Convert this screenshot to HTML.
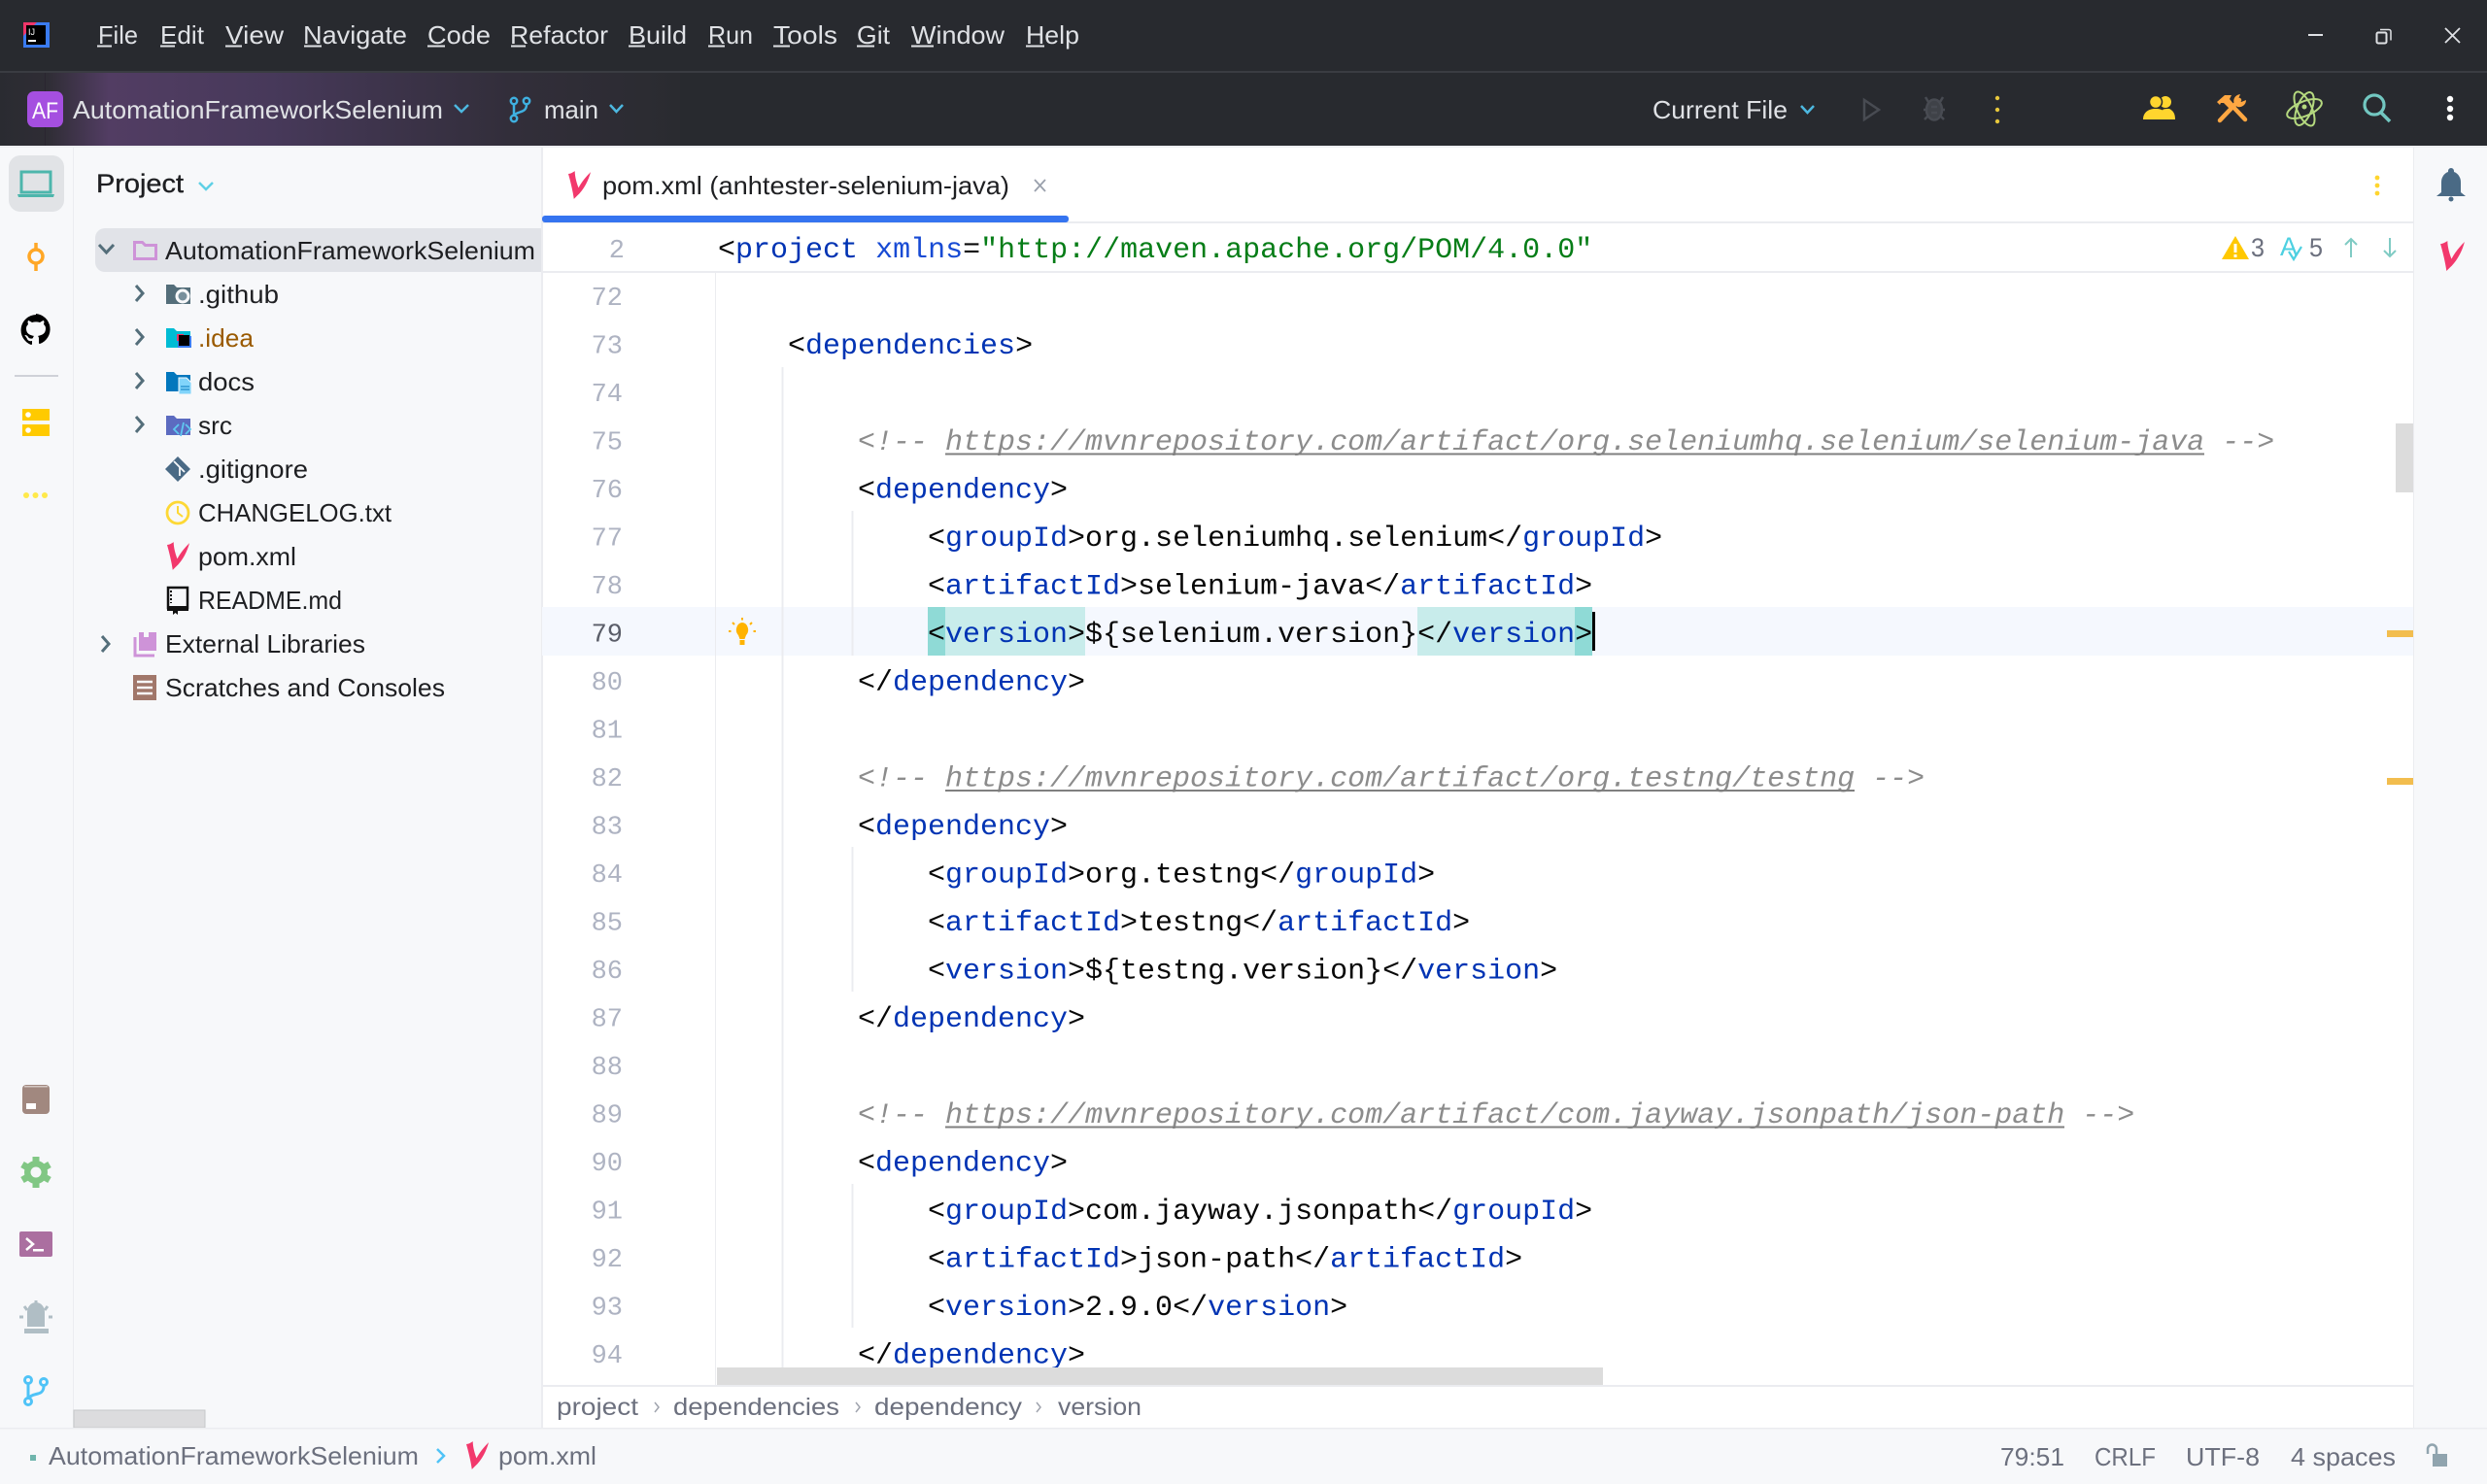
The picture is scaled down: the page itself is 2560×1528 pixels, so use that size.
<!DOCTYPE html>
<html lang="en"><head><meta charset="utf-8"><title>pom.xml</title>
<style>
html,body{margin:0;padding:0;width:2560px;height:1528px;overflow:hidden;background:#f7f8fa}
svg{display:block}
text{font-family:"Liberation Sans",sans-serif;white-space:pre}
.m{font-family:"Liberation Mono",monospace;font-size:30px;fill:#080808}
.n{font-family:"Liberation Mono",monospace;font-size:27px;fill:#aeb3c2;text-anchor:end}
.b{fill:#0033b3}
.c{fill:#8c8c8c;font-style:italic}
.w{font-size:26px;fill:#dfe1e5}
.t{font-size:26px;fill:#1e1f22}
.g{font-size:25px;fill:#6c707e}
</style></head>
<body>
<svg xmlns="http://www.w3.org/2000/svg" width="2560" height="1528" viewBox="0 0 2560 1528">
<defs>
<linearGradient id="pg" x1="0" x2="1" y1="0" y2="0">
<stop offset="0" stop-color="#2a2b31"/><stop offset=".07" stop-color="#2f2d35"/><stop offset=".16" stop-color="#523d63"/><stop offset=".4" stop-color="#47395a"/><stop offset=".75" stop-color="#322e3a"/><stop offset="1" stop-color="#2a2b30"/>
</linearGradient>
<symbol id="v" viewBox="0 0 24 30"><path d="M0 3C2 3 5 1.500 7 0C7 6 9 13 11 18C14 12 19 6 24 1C22 9 17 20 9 27L6 30C5 22 2 10 0 3Z" fill="#f2386c"/></symbol>
<clipPath id="ed"><rect x="558" y="280" width="1926" height="1146"/></clipPath>
</defs>

<!-- window chrome -->
<rect width="2560" height="1528" fill="#f7f8fa"/>
<rect width="2560" height="150" fill="#282a2f"/>
<rect y="75" width="700" height="75" fill="url(#pg)"/>
<rect y="73" width="2560" height="2" fill="#3a3c42"/>
<rect x="46" y="75" width="1" height="75" fill="#2a2530"/>

<!-- IJ logo -->
<rect x="24" y="23" width="27" height="26" fill="#3a7bf0"/>
<path d="M24 23h14l-14 14z" fill="#f0366a"/>
<rect x="27" y="26" width="20" height="20" fill="#000"/>
<text x="29" y="36" font-size="9" fill="#fff">IJ</text>
<rect x="29" y="41" width="8" height="2" fill="#fff"/>

<!-- menu -->
<g class="menu">
<text class="w" x="101" y="45" textLength="41" lengthAdjust="spacingAndGlyphs">File</text>
<text class="w" x="165" y="45" textLength="45" lengthAdjust="spacingAndGlyphs">Edit</text>
<text class="w" x="232" y="45" textLength="60" lengthAdjust="spacingAndGlyphs">View</text>
<text class="w" x="312" y="45" textLength="107" lengthAdjust="spacingAndGlyphs">Navigate</text>
<text class="w" x="440" y="45" textLength="65" lengthAdjust="spacingAndGlyphs">Code</text>
<text class="w" x="525" y="45" textLength="101" lengthAdjust="spacingAndGlyphs">Refactor</text>
<text class="w" x="647" y="45" textLength="60" lengthAdjust="spacingAndGlyphs">Build</text>
<text class="w" x="729" y="45" textLength="46" lengthAdjust="spacingAndGlyphs">Run</text>
<text class="w" x="796" y="45" textLength="66" lengthAdjust="spacingAndGlyphs">Tools</text>
<text class="w" x="882" y="45" textLength="34" lengthAdjust="spacingAndGlyphs">Git</text>
<text class="w" x="938" y="45" textLength="96" lengthAdjust="spacingAndGlyphs">Window</text>
<text class="w" x="1056" y="45" textLength="55" lengthAdjust="spacingAndGlyphs">Help</text>
<path d="M100 47.500h15M165 47.500h15M232 47.500h17M313 47.500h18M440 47.500h18M526 47.500h15M647 47.500h17M729 47.500h17M796 47.500h17M882 47.500h18M938 47.500h23M1056 47.500h19" stroke="#dfe1e5" stroke-width="2" fill="none"/>
</g>

<!-- window controls -->
<path d="M2376 36h15" stroke="#dfe1e5" stroke-width="2"/>
<rect x="2446.500" y="33.500" width="10" height="11" rx="1.500" fill="none" stroke="#dfe1e5" stroke-width="2"/>
<path d="M2450 30.500h9a2 2 0 0 1 2 2v9" fill="none" stroke="#dfe1e5" stroke-width="1.500"/>
<path d="M2517 29l15 15M2532 29l-15 15" stroke="#dfe1e5" stroke-width="1.800"/>

<!-- toolbar left -->
<rect x="28" y="94" width="37" height="37" rx="7" fill="#a54fe0"/>
<text x="33" y="122" font-size="24" fill="#fff" textLength="27" lengthAdjust="spacingAndGlyphs">AF</text>
<text class="w" x="75" y="122" textLength="381" lengthAdjust="spacingAndGlyphs">AutomationFrameworkSelenium</text>
<path d="M468 108l7 7 7-7" fill="none" stroke="#4db8e0" stroke-width="2.500"/>
<g fill="none" stroke="#3fb0e0" stroke-width="2.500">
<circle cx="529" cy="104" r="3.200"/><circle cx="529" cy="122" r="3.200"/><circle cx="542" cy="104" r="3.200"/>
<path d="M529 107.500v11M542 107.500c0 6-4 7-7 8s-5 2-6 3"/>
</g>
<text class="w" x="560" y="122" textLength="56" lengthAdjust="spacingAndGlyphs">main</text>
<path d="M628 108l6.500 7 6.500-7" fill="none" stroke="#4db8e0" stroke-width="2.500"/>

<!-- toolbar right -->
<text class="w" x="1701" y="122" textLength="139" lengthAdjust="spacingAndGlyphs">Current File</text>
<path d="M1854 109l6.500 7 6.500-7" fill="none" stroke="#4db8e0" stroke-width="2.500"/>
<path d="M1919 103v20l15-10z" fill="none" stroke="#484b52" stroke-width="2.500"/>
<g fill="#3f4248" stroke="#484b52" stroke-width="2.500">
<ellipse cx="1991" cy="113" rx="8" ry="10.500"/><path d="M1983 113h-3M1999 113h3M1985 105l-3-5M1997 105l3-5M1984 120l-3 3M1998 120l3 3"/>
<path d="M1988 110h6M1988 116h6"/>
</g>
<g fill="#e8c83c"><circle cx="2056" cy="101" r="2.200"/><circle cx="2056" cy="113" r="2.200"/><circle cx="2056" cy="125" r="2.200"/></g>
<!-- people -->
<g fill="#ffd52e">
<circle cx="2229" cy="105" r="6"/>
<path d="M2228 123h11c0-6-2-9-6-11 -3 0-5 0-7 1 2 3 2 6 2 10z"/>
<circle cx="2219" cy="105" r="6.500" stroke="#282a2f" stroke-width="1.500"/>
<path d="M2206 123c0-7 5-11 13-11s12 4 12 11z" stroke="#282a2f" stroke-width="0"/>
</g>
<!-- tools -->
<g fill="none" stroke="#ffa742" stroke-width="4.500" stroke-linecap="round">
<path d="M2285 124l20-21"/>
<path d="M2311 123l-17-18"/>
</g>
<path d="M2282 105l8-7h7l-2 4 5 6-5 4-6-6h-3l-1 2z" fill="#ffa742"/>
<path d="M2300 107c-2-4 0-9 6-10l-2 5 3 3 5-2c0 6-6 8-9 7z" fill="#ffa742"/>
<!-- atom -->
<g fill="none" stroke="#b5d97f" stroke-width="2">
<ellipse cx="2372" cy="112" rx="19" ry="7.500" transform="rotate(-22 2372 112)"/>
<ellipse cx="2372" cy="112" rx="19" ry="7.500" transform="rotate(65 2372 112)"/>
<ellipse cx="2372" cy="112" rx="18" ry="7.500" transform="rotate(112 2372 112)"/>
<circle cx="2372" cy="110" r="1.500" fill="#b5d97f"/>
</g>
<!-- search -->
<circle cx="2444" cy="108" r="10" fill="none" stroke="#72c7c1" stroke-width="3.200"/>
<path d="M2451 116l9 9" stroke="#72c7c1" stroke-width="3.500"/>
<g fill="#fff"><circle cx="2522" cy="102" r="3.200"/><circle cx="2522" cy="112" r="3.200"/><circle cx="2522" cy="121" r="3.200"/></g>

<!-- main panels -->
<rect y="150" width="2560" height="2" fill="#eeeff2"/>
<rect x="558" y="152" width="1926" height="1318" fill="#fff"/>
<rect x="75" y="152" width="1" height="1318" fill="#ebecf0"/>
<rect x="557" y="152" width="2" height="1318" fill="#ebecf0"/>
<rect x="2484" y="152" width="1" height="1318" fill="#ebecf0"/>

<!-- left rail top -->
<rect x="9" y="160" width="57" height="58" rx="12" fill="#e1e3e6"/>
<g fill="none" stroke="#4db6ac" stroke-width="3"><rect x="22" y="177" width="30" height="21"/></g>
<path d="M18 200h38l-1 3h-36z" fill="#4db6ac"/>
<g fill="none" stroke="#ffa726" stroke-width="3.500"><circle cx="37" cy="264" r="7"/><path d="M37 250v7M37 271v8"/></g>
<!-- github -->
<path d="M37 324a16 16 0 0 0-5 31c1 0 1-1 1-1v-3c-4 1-5-2-5-2-1-2-2-3-2-3-1-1 0-1 0-1 2 0 3 2 3 2 1 2 4 2 5 1 0-1 1-2 1-2-4-1-8-2-8-8 0-2 1-3 2-4 0-1-1-2 0-4 0 0 1 0 4 2a14 14 0 0 1 8 0c3-2 4-2 4-2 1 2 0 3 0 4 1 1 2 2 2 4 0 6-4 7-8 8 1 1 1 2 1 3v4s0 1 1 1a16 16 0 0 0-4-31z" fill="#000"/>
<rect x="15" y="386" width="45" height="2" fill="#cfd1d8"/>
<rect x="23" y="421" width="28" height="12" fill="#ffca00"/><rect x="23" y="437" width="28" height="12" fill="#ffca00"/>
<circle cx="29" cy="427" r="2.800" fill="#fff"/><circle cx="29" cy="443" r="2.800" fill="#fff"/>
<g fill="#ffe94a"><circle cx="27" cy="510" r="3"/><circle cx="36.500" cy="510" r="3"/><circle cx="46" cy="510" r="3"/></g>

<!-- left rail bottom -->
<rect x="23" y="1117" width="28" height="30" rx="4" fill="#a1887f"/>
<rect x="27" y="1136" width="10" height="6" fill="#fff"/>
<rect x="25" y="1118" width="24" height="1.500" fill="#d4c7c2"/>
<g fill="#81c784">
<circle cx="37" cy="1207" r="12"/>
<g stroke="#81c784" stroke-width="7">
<path d="M37 1191v32M23 1199l28 16M51 1199l-28 16"/>
</g>
<circle cx="37" cy="1207" r="5.500" fill="#f7f8fa"/>
</g>
<rect x="20" y="1268" width="34" height="26" rx="2" fill="#ab6fa0"/>
<path d="M27 1275l7 6-7 6" fill="none" stroke="#fff" stroke-width="2.500"/>
<rect x="34" y="1286" width="11" height="2.500" fill="#fff"/>
<path d="M28 1366v-15a9 10 0 0 1 18 0v15z" fill="#b0bec5"/>
<rect x="25" y="1368" width="25" height="5" fill="#b0bec5"/>
<path d="M37 1339v5M25 1345l3 4M49 1345l-3 4M20 1356h4M50 1356h4" stroke="#b0bec5" stroke-width="3"/>
<g fill="none" stroke="#4fc3f7" stroke-width="3">
<circle cx="29" cy="1421" r="3.500"/><circle cx="29" cy="1443" r="3.500"/><circle cx="45" cy="1423" r="3.500"/>
<path d="M29 1425v14M45 1427c0 5-2 7-6 8s-8 2-10 5"/>
</g>

<!-- project panel -->
<text x="99" y="198" font-size="27" fill="#1e1f22" stroke="#1e1f22" stroke-width=".35" textLength="90" lengthAdjust="spacingAndGlyphs">Project</text>
<path d="M205 188l7 7 7-7" fill="none" stroke="#5fd0e6" stroke-width="2.500"/>
<path d="M108 235h449v45H108a10 10 0 0 1-10-10v-25a10 10 0 0 1 10-10z" fill="#e1e3e8"/>

<g fill="none" stroke="#546e7a" stroke-width="3">
<path d="M102 252l7.500 8 7.500-8"/>
<path d="M140 294l7 8-7 8M140 339l7 8-7 8M140 384l7 8-7 8M140 429l7 8-7 8M105 655l7 8-7 8"/>
</g>

<text class="t" x="170" y="267" textLength="381" lengthAdjust="spacingAndGlyphs">AutomationFrameworkSelenium</text>
<text class="t" x="204" y="312" textLength="83" lengthAdjust="spacingAndGlyphs">.github</text>
<text class="t" x="204" y="357" textLength="57" lengthAdjust="spacingAndGlyphs" style="fill:#9a5a00">.idea</text>
<text class="t" x="204" y="402" textLength="58" lengthAdjust="spacingAndGlyphs">docs</text>
<text class="t" x="204" y="447" textLength="35" lengthAdjust="spacingAndGlyphs">src</text>
<text class="t" x="204" y="492" textLength="113" lengthAdjust="spacingAndGlyphs">.gitignore</text>
<text class="t" x="204" y="537" textLength="199" lengthAdjust="spacingAndGlyphs">CHANGELOG.txt</text>
<text class="t" x="204" y="582" textLength="101" lengthAdjust="spacingAndGlyphs">pom.xml</text>
<text class="t" x="204" y="627" textLength="148" lengthAdjust="spacingAndGlyphs">README.md</text>
<text class="t" x="170" y="672" textLength="206" lengthAdjust="spacingAndGlyphs">External Libraries</text>
<text class="t" x="170" y="717" textLength="288" lengthAdjust="spacingAndGlyphs">Scratches and Consoles</text>

<!-- tree icons -->
<path d="M138.500 249.500h8l3 3h11v14h-22z" fill="none" stroke="#ce93d8" stroke-width="3"/>
<path d="M171 293h8l3 3h14v17h-25z" fill="#546e7a"/>
<circle cx="188" cy="305" r="7.500" fill="#f7f8fa"/><circle cx="188" cy="305" r="4.500" fill="#78909c"/>
<path d="M171 338h8l3 3h14v17h-25z" fill="#00bcd4"/>
<rect x="183" y="346" width="14" height="12" fill="#3a7bf0"/><rect x="182" y="344" width="7" height="7" fill="#f0366a"/>
<rect x="184" y="345" width="11" height="11" fill="#000"/>
<path d="M171 383h8l3 3h14v17h-25z" fill="#0277bd"/>
<path d="M184 389h8l5 5v12h-13z" fill="#81d4fa" stroke="#f7f8fa" stroke-width="1"/>
<path d="M186 398h9M186 401h9" stroke="#0277bd" stroke-width="1"/>
<path d="M171 428h8l3 3h14v17h-25z" fill="#5c6bc0"/>
<path d="M184 437l-5 5 5 5M191 437l5 5-5 5M189 435l-3 14" fill="none" stroke="#5fc8f0" stroke-width="1.800"/>
<path d="M183 470l13 13-13 13-13-13z" fill="#4a6a85"/>
<path d="M179 475l6 6M185 481v9M185 481l5 5" stroke="#f7f8fa" stroke-width="1.800"/>
<circle cx="183" cy="528" r="11" fill="none" stroke="#fdd835" stroke-width="2.800"/>
<path d="M183 521v7l5 4" fill="none" stroke="#fdd835" stroke-width="2"/>
<use href="#v" x="172" y="558" width="23" height="29"/>
<rect x="173" y="605" width="20" height="21" fill="#f7f8fa" stroke="#111" stroke-width="2.500"/>
<rect x="172" y="624" width="22" height="5" fill="#111"/>
<path d="M176 608v13" stroke="#111" stroke-width="2" stroke-dasharray="2 2"/>
<path d="M178 626h5v7l-2.500-2-2.500 2z" fill="#111"/>
<path d="M143 651h18v19h-18z" fill="#ce93d8"/>
<path d="M148 651v5h5v-5" fill="#f7f8fa"/>
<path d="M139 656v19h20" fill="none" stroke="#ce93d8" stroke-width="3"/>
<rect x="137" y="695" width="24" height="26" fill="#a1776a"/>
<path d="M141 702h16M141 708h16M141 714h16" stroke="#f7f8fa" stroke-width="2.500"/>
<rect x="76" y="1452" width="135" height="18" fill="#dcdcde" stroke="#c6c7c9" stroke-width="1"/>

<!-- tab bar -->
<use href="#v" x="585" y="176" width="23" height="29"/>
<text x="620" y="200" font-size="26" fill="#1e1f22" textLength="419" lengthAdjust="spacingAndGlyphs">pom.xml (anhtester-selenium-java)</text>
<path d="M1065 185l11 12M1076 185l-11 12" stroke="#9aa0ac" stroke-width="1.800"/>
<g fill="#ffd52e"><circle cx="2447" cy="183" r="2.400"/><circle cx="2447" cy="191" r="2.400"/><circle cx="2447" cy="199" r="2.400"/></g>
<rect x="558" y="228" width="1926" height="2" fill="#ebecf0"/>
<rect x="558" y="222" width="542" height="7" rx="3" fill="#3574f0"/>
<rect x="558" y="279" width="1926" height="2" fill="#ebecf0"/>

<!-- sticky line -->
<text class="n" x="643" y="265">2</text>
<text class="m" x="739" y="265">&lt;<tspan class="b">project</tspan> <tspan fill="#174ad4">xmlns</tspan>=<tspan fill="#067d17">"http://maven.apache.org/POM/4.0.0"</tspan></text>
<path d="M2301 243l14 24h-28z" fill="#ffc800"/>
<rect x="2299.500" y="251" width="3" height="9" fill="#fff"/><rect x="2299.500" y="262" width="3" height="3" fill="#fff"/>
<text x="2317" y="264" font-size="27" fill="#6c707e" textLength="14" lengthAdjust="spacingAndGlyphs">3</text>
<text x="2347" y="263" font-size="27" fill="#4dd0e1" textLength="18" lengthAdjust="spacingAndGlyphs">A</text>
<path d="M2356 259l5 8 8-13" fill="none" stroke="#4dd0e1" stroke-width="2.200"/>
<text x="2377" y="264" font-size="27" fill="#6c707e" textLength="14" lengthAdjust="spacingAndGlyphs">5</text>
<path d="M2420 265v-19M2414 252l6-6 6 6M2460 245v19M2454 258l6 6 6-6" fill="none" stroke="#80cbc4" stroke-width="2"/>

<!-- right rail -->
<path d="M2513 198v-10a10 11 0 0 1 7-11v-1a3 3 0 0 1 6 0v1a10 11 0 0 1 7 11v10l5 4h-30z" fill="#4a6a85"/>
<circle cx="2523" cy="205" r="2.500" fill="#4a6a85"/>
<use href="#v" x="2512" y="248" width="25" height="31"/>

<!-- editor -->
<rect x="558" y="625" width="1926" height="50" fill="#f5f8fe"/>
<rect x="736" y="281" width="1" height="1145" fill="#ebecf0"/>
<path d="M805.500 378V1426M877.500 526V675M877.500 872V1021M877.500 1219V1367" stroke="#ebecf0" stroke-width="2" fill="none"/>
<rect x="955" y="625" width="18" height="50" fill="#8fdad6"/><rect x="973" y="625" width="144" height="50" fill="#c8eceb"/>
<rect x="1459" y="625" width="162" height="50" fill="#c8eceb"/><rect x="1621" y="625" width="18" height="50" fill="#8fdad6"/>

<g clip-path="url(#ed)">
<g>
<text class="n" x="641" y="314">72</text><text class="n" x="641" y="363.500">73</text><text class="n" x="641" y="413">74</text><text class="n" x="641" y="462.500">75</text><text class="n" x="641" y="512">76</text><text class="n" x="641" y="561.500">77</text><text class="n" x="641" y="611">78</text><text class="n" x="641" y="660.500" style="fill:#5a5d68">79</text><text class="n" x="641" y="710">80</text><text class="n" x="641" y="759.500">81</text><text class="n" x="641" y="809">82</text><text class="n" x="641" y="858.500">83</text><text class="n" x="641" y="908">84</text><text class="n" x="641" y="957.500">85</text><text class="n" x="641" y="1007">86</text><text class="n" x="641" y="1056.500">87</text><text class="n" x="641" y="1106">88</text><text class="n" x="641" y="1155.500">89</text><text class="n" x="641" y="1205">90</text><text class="n" x="641" y="1254.500">91</text><text class="n" x="641" y="1304">92</text><text class="n" x="641" y="1353.500">93</text><text class="n" x="641" y="1403">94</text>
</g>
<text class="m" x="811" y="364">&lt;<tspan class="b">dependencies</tspan>&gt;</text>

<text class="m c" x="883" y="463">&lt;!-- https://mvnrepository.com/artifact/org.seleniumhq.selenium/selenium-java --&gt;</text>
<rect x="973" y="466.500" width="1296" height="2" fill="#7f7f7f"/>
<text class="m" x="883" y="512.500">&lt;<tspan class="b">dependency</tspan>&gt;</text>
<text class="m" x="955" y="562">&lt;<tspan class="b">groupId</tspan>&gt;org.seleniumhq.selenium&lt;/<tspan class="b">groupId</tspan>&gt;</text>
<text class="m" x="955" y="611.500">&lt;<tspan class="b">artifactId</tspan>&gt;selenium-java&lt;/<tspan class="b">artifactId</tspan>&gt;</text>
<text class="m" x="955" y="661">&lt;<tspan class="b">version</tspan>&gt;${selenium.version}&lt;/<tspan class="b">version</tspan>&gt;</text>
<text class="m" x="883" y="710.500">&lt;/<tspan class="b">dependency</tspan>&gt;</text>

<text class="m c" x="883" y="809.500">&lt;!-- https://mvnrepository.com/artifact/org.testng/testng --&gt;</text>
<rect x="973" y="813" width="936" height="2" fill="#7f7f7f"/>
<text class="m" x="883" y="859">&lt;<tspan class="b">dependency</tspan>&gt;</text>
<text class="m" x="955" y="908.500">&lt;<tspan class="b">groupId</tspan>&gt;org.testng&lt;/<tspan class="b">groupId</tspan>&gt;</text>
<text class="m" x="955" y="958">&lt;<tspan class="b">artifactId</tspan>&gt;testng&lt;/<tspan class="b">artifactId</tspan>&gt;</text>
<text class="m" x="955" y="1007.500">&lt;<tspan class="b">version</tspan>&gt;${testng.version}&lt;/<tspan class="b">version</tspan>&gt;</text>
<text class="m" x="883" y="1057">&lt;/<tspan class="b">dependency</tspan>&gt;</text>

<text class="m c" x="883" y="1156">&lt;!-- https://mvnrepository.com/artifact/com.jayway.jsonpath/json-path --&gt;</text>
<rect x="973" y="1159.500" width="1152" height="2" fill="#7f7f7f"/>
<text class="m" x="883" y="1205.500">&lt;<tspan class="b">dependency</tspan>&gt;</text>
<text class="m" x="955" y="1255">&lt;<tspan class="b">groupId</tspan>&gt;com.jayway.jsonpath&lt;/<tspan class="b">groupId</tspan>&gt;</text>
<text class="m" x="955" y="1304.500">&lt;<tspan class="b">artifactId</tspan>&gt;json-path&lt;/<tspan class="b">artifactId</tspan>&gt;</text>
<text class="m" x="955" y="1354">&lt;<tspan class="b">version</tspan>&gt;2.9.0&lt;/<tspan class="b">version</tspan>&gt;</text>
<text class="m" x="883" y="1403.500">&lt;/<tspan class="b">dependency</tspan>&gt;</text>
</g>

<rect x="1639" y="630" width="3" height="40" fill="#000"/>
<!-- bulb -->
<g fill="#ffb300">
<path d="M764 641a6.500 7.500 0 0 0-4 13l1.500 4h5l1.500-4a6.500 7.500 0 0 0-4-13z"/>
<rect x="761.500" y="659" width="5" height="5"/>
</g>
<path d="M764 636v2.500M754 641l2 2M774 641l-2 2M750 650h2.500M778 650h-2.500" stroke="#ffb300" stroke-width="2"/>

<!-- scrollbars/marks -->
<rect x="2466" y="436" width="18" height="71" fill="#dcdcdc"/>
<rect x="2457" y="649" width="27" height="7" fill="#f2bd4e"/>
<rect x="2457" y="801" width="27" height="7" fill="#f2bd4e"/>
<rect x="738" y="1408" width="912" height="18" fill="#dcdcdc"/>

<!-- breadcrumb -->
<rect x="558" y="1426" width="1926" height="2" fill="#ebecf0"/>
<text class="g" x="573" y="1457" textLength="84" lengthAdjust="spacingAndGlyphs">project</text>
<text class="g" x="693" y="1457" textLength="171" lengthAdjust="spacingAndGlyphs">dependencies</text>
<text class="g" x="900" y="1457" textLength="152" lengthAdjust="spacingAndGlyphs">dependency</text>
<text class="g" x="1089" y="1457" textLength="86" lengthAdjust="spacingAndGlyphs">version</text>
<path d="M674 1444l4 5-4 5M881 1444l4 5-4 5M1067 1444l4 5-4 5" fill="none" stroke="#a0a4ae" stroke-width="1.500"/>

<!-- status bar -->
<rect y="1470" width="2560" height="58" fill="#f7f8fa"/>
<rect y="1470" width="2560" height="1.500" fill="#ebecf0"/>
<rect x="31" y="1498" width="6" height="6" fill="#6fb5ad"/>
<text class="g" x="50" y="1508" textLength="381" lengthAdjust="spacingAndGlyphs" style="font-size:26px">AutomationFrameworkSelenium</text>
<path d="M450 1492l7 7-7 7" fill="none" stroke="#4fc3f7" stroke-width="2.500"/>
<use href="#v" x="480" y="1484" width="23" height="29"/>
<text class="g" x="513" y="1508" textLength="101" lengthAdjust="spacingAndGlyphs" style="font-size:26px">pom.xml</text>
<text class="g" x="2059" y="1509" textLength="66" lengthAdjust="spacingAndGlyphs" style="font-size:26px">79:51</text>
<text class="g" x="2156" y="1509" textLength="63" lengthAdjust="spacingAndGlyphs" style="font-size:26px">CRLF</text>
<text class="g" x="2250" y="1509" textLength="76" lengthAdjust="spacingAndGlyphs" style="font-size:26px">UTF-8</text>
<text class="g" x="2358" y="1509" textLength="108" lengthAdjust="spacingAndGlyphs" style="font-size:26px">4 spaces</text>
<rect x="2504" y="1497" width="15" height="13" fill="#90a4ae"/>
<path d="M2499 1497v-5a4.500 4.500 0 0 1 9 0v5" fill="none" stroke="#90a4ae" stroke-width="2.500"/>
</svg>
</body></html>
